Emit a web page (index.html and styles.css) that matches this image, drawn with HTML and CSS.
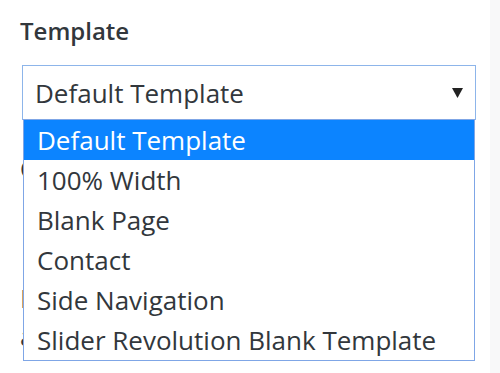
FILE: index.html
```html
<!DOCTYPE html>
<html>
<head>
<meta charset="utf-8">
<link rel="stylesheet" href="styles.css">
</head>
<body>
<div class="page">
  <main class="main">
    <div class="field-label">Template</div>
    <div class="select-wrap">
      <div class="select">
        <span class="select-value">Default Template</span>
        <svg class="arrow" width="11" height="10" viewBox="0 0 11 10"><polygon points="0,0 11,0 5.5,10" fill="#222"/></svg>
      </div>
      <ul class="dropdown">
        <li class="option selected">Default Template</li>
        <li class="option">100% Width</li>
        <li class="option">Blank Page</li>
        <li class="option">Contact</li>
        <li class="option">Side Navigation</li>
        <li class="option">Slider Revolution Blank Template</li>
      </ul>
    </div>
    <div class="field-label order">Order</div>
    <div class="order-input"></div>
    <p class="help">Need help? Use the Help tab above the screen title.</p>
  </main>
  <aside class="side"></aside>
</div>
</body>
</html>
```
FILE: styles.css
```css
html, body {
  margin: 0;
  padding: 0;
  background: #fff;
}
.page {
  display: flex;
  width: 500px;
  height: 373px;
  overflow: hidden;
}
.main {
  flex: 1;
  padding: 14px 0 0 20px;
  font-family: "Open Sans", "Noto Sans", sans-serif;
  color: #32373c;
}
.side {
  width: 10px;
  background: #f8f8f9;
}
.field-label {
  font-weight: 600;
  font-size: 24px;
  line-height: 34px;
}
.select-wrap {
  position: relative;
  margin: 17px 0 0 2px;
  width: 454px;
}
.select {
  box-sizing: border-box;
  height: 55px;
  border: 1px solid #8db5ea;
  display: flex;
  align-items: center;
  justify-content: space-between;
  padding: 0 12px 0 12px;
  font-size: 26px;
}
.select-value {
  line-height: 30px;
  padding-top: 1px;
}
.arrow {
  display: block;
}
.dropdown {
  position: absolute;
  top: 54px;
  left: 1px;
  width: 452px;
  box-sizing: border-box;
  margin: 0;
  padding: 0;
  list-style: none;
  background: #fff;
  border: 1px solid #7fa6e6;
  font-size: 26px;
}
.option {
  height: 40px;
  line-height: 40px;
  padding-left: 13px;
  white-space: nowrap;
}
.option.selected {
  background: #0c84ff;
  color: #fff;
}
.order {
  margin-top: 32px;
}
.order-input {
  height: 93px;
}
.help {
  margin: 0;
  font-size: 26px;
  line-height: 38px;
  width: 380px;
}
```
